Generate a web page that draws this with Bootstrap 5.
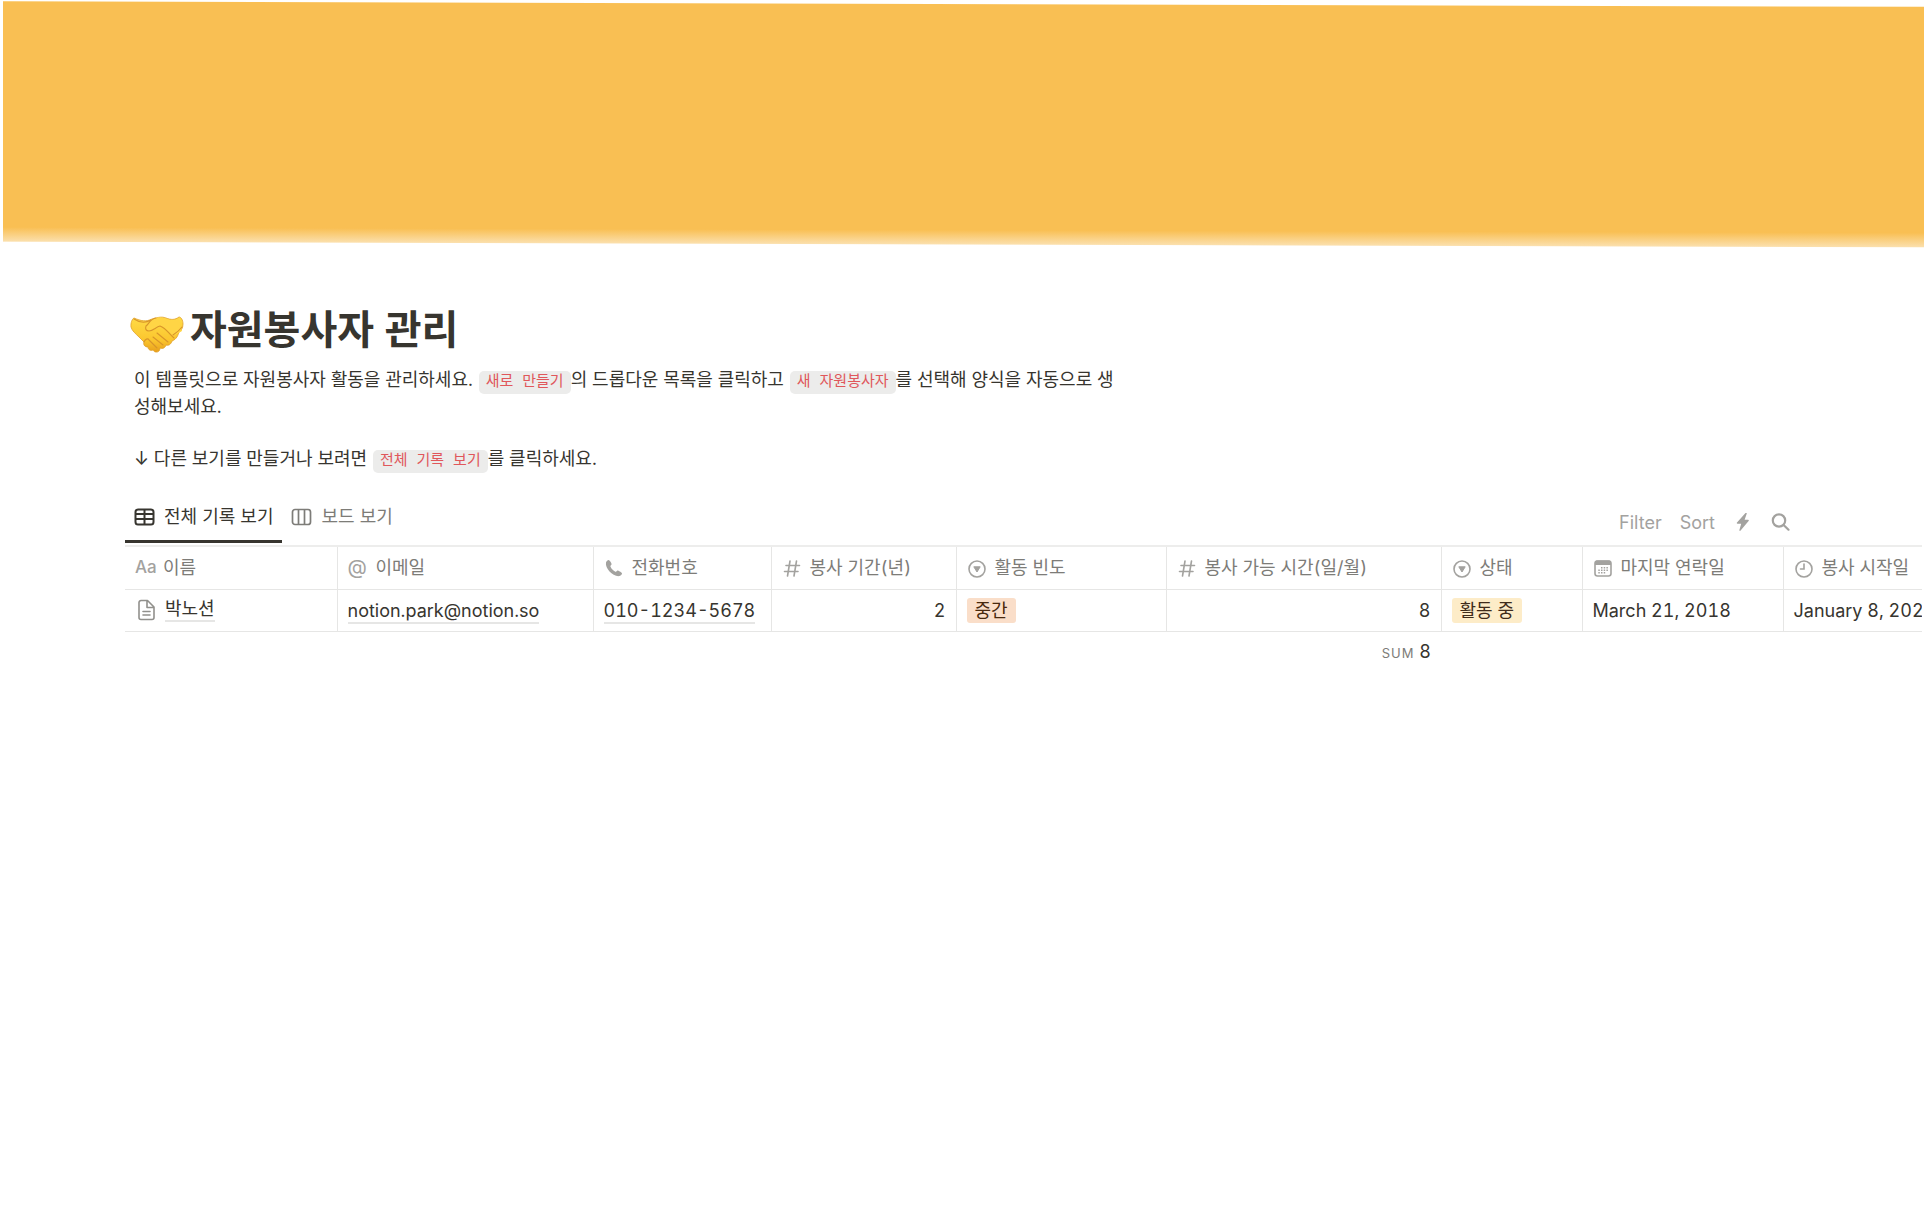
<!DOCTYPE html>
<html lang="ko">
<head>
<meta charset="utf-8">
<meta name="viewport" content="width=device-width, initial-scale=1">
<title>자원봉사자 관리</title>
<link href="https://cdn.jsdelivr.net/npm/bootstrap@5.3.0/dist/css/bootstrap.min.css" rel="stylesheet">
<style>
body{font-family:Inter,"Noto Sans CJK KR",sans-serif;font-size:18px;line-height:27px;color:#37352f;background:#fff;overflow-x:hidden;font-variant-numeric:tabular-nums}
.cover{height:241px;margin:4px 0 0 3px;background:linear-gradient(#f9bf53 0,#f9bf53 226px,#fbdfab 240px,#fff 241px);transform:skewY(.17deg)}
.page-body{padding:61px 2px 0 125px}
.page-title{font-size:40px;font-weight:700;line-height:48px;gap:6px;padding-left:5px}
.intro{max-width:1000px;padding:12px 0 0 9px}
.intro p + p{margin-top:25px}
.intro code{font-family:"Liberation Mono","Noto Sans CJK KR",monospace;font-size:15px;line-height:15px;color:#e0575b;background:#ececeb;border-radius:5px;padding:3px 7px;margin-left:1px}
.view-bar{margin-top:25px;height:48px;padding-right:123px}
.view-tab{height:46px;padding:0 9px 4px;gap:9px;color:#7d7c78;background:none;border:0;border-bottom:3px solid transparent}
.view-tab.active{color:#37352f;border-bottom-color:#37352f}
.tool{color:#a3a29f;background:none;border:0;padding:0 9px;height:50px}
.tool-bolt{padding:0 12px}
.records{border-top:2px solid #ededec;overflow:hidden}
.records table{table-layout:fixed;width:1858px;margin:0}
.records th,.records td{height:42px;padding:0 10px;font-weight:400;white-space:nowrap;vertical-align:middle;border-bottom:1px solid #e6e6e5;border-right:1px solid #e6e6e5}
.records th{color:#7d7c78}
.records tfoot td{border:0}
.head-cell{gap:8px}
.head-icon{width:20px;color:#a3a29f;flex:none}
.page-icon{width:22px;color:#91908c;flex:none}
.aa{font-weight:500;font-size:17px}
.at{font-size:20px}
.under{color:inherit;text-decoration:none;border-bottom:2px solid #e6e6e5;line-height:22px;display:inline-block}
.tag{display:inline-block;line-height:25px;border-radius:3px;padding:0 8px}
.tag-orange{background:#fadec9;color:#49290e}
.tag-yellow{background:#fdecc8;color:#402c1b}
.sum-label{font-size:13px;letter-spacing:1px;color:#7d7c78}
.w-name{width:212px}.w-mail{width:256px}.w-phone{width:178px}.w-years{width:185px}.w-freq{width:210px}.w-hours{width:275px}.w-status{width:141px}.w-last{width:201px}.w-start{width:200px}
</style>
<script src="https://cdn.jsdelivr.net/npm/bootstrap@5.3.0/dist/js/bootstrap.bundle.min.js"></script>
</head>
<body>
<header class="cover"></header>
<main class="page-body">
  <h1 class="page-title d-flex align-items-center mb-0">
    <svg width="54" height="48" viewBox="0 0 54 48" aria-hidden="true">
      <defs><linearGradient id="skin" x1="0" y1="0" x2="0" y2="1"><stop offset="0" stop-color="#ffdb47"/><stop offset=".65" stop-color="#fbc62e"/><stop offset="1" stop-color="#e8a01c"/></linearGradient></defs>
      <path d="M4 12C2 13 .6 17 1 21c1 4 5 7 8 10l5 5c-1 3 1 5 4 5 0 3 3 4 5 3 1 2 4 3 6 1 1-1 1-3 1-3 3 1 5 0 6-3 3 1 5-1 6-4 5-2 6-6 7-9 2-1 4-4 4-8s-2-7-4-7c-4 3-8 3-13 1-5-2-10 0-14 1-6 3-11 2-18-1z" fill="url(#skin)" stroke="#e0a02a" stroke-width=".8"/>
      <path d="M16 20c3-1 4-7 10-8 4-1 8 0 11 1 5 2 8 2 12 0l3 12-9 5c-4-4-8-9-13-10-4 3-9 6-12 5-2-1-3-3-2-5z" fill="#ffd545"/>
      <path d="M4 13c6 4 12 4 17 1M16 20c-1 3 0 5 3 5 4 0 7-4 11-5 6 2 10 9 14 12M16 20c3-2 4-7 10-8M27 27l11 9M23 31l10 8M19 34l8 8M14 36c1-3 4-4 5-2M52 21c-3 4-6 6-9 8" fill="none" stroke="#d8952a" stroke-width="1.100" stroke-linecap="round"/>
    </svg>
    <span>자원봉사자 관리</span>
  </h1>
  <div class="intro">
    <p class="mb-0">이 템플릿으로 자원봉사자 활동을 관리하세요. <code>새로 만들기</code>의 드롭다운 목록을 클릭하고 <code>새 자원봉사자</code>를 선택해 양식을 자동으로 생성해보세요.</p>
    <p class="mb-0">↓ 다른 보기를 만들거나 보려면 <code>전체 기록 보기</code>를 클릭하세요.</p>
  </div>

  <div class="view-bar d-flex justify-content-between align-items-start">
    <div class="d-flex" role="tablist">
      <button type="button" role="tab" aria-selected="true" class="view-tab active d-flex align-items-center">
        <svg width="21" height="18" viewBox="0 0 21 18" fill="none" stroke="currentColor" stroke-width="2" aria-hidden="true"><rect x="1.500" y="1.500" width="18" height="15" rx="2.500"/><path d="M2 6h17M2 11h17M10.500 2v14"/></svg>
        <span>전체 기록 보기</span>
      </button>
      <button type="button" role="tab" aria-selected="false" class="view-tab d-flex align-items-center">
        <svg width="21" height="18" viewBox="0 0 21 18" fill="none" stroke="currentColor" stroke-width="1.700" aria-hidden="true"><rect x="1.500" y="1.500" width="18" height="15" rx="2.500"/><path d="M7.500 2v14M13.500 2v14"/></svg>
        <span>보드 보기</span>
      </button>
    </div>
    <div class="d-flex">
      <button type="button" class="tool">Filter</button>
      <button type="button" class="tool">Sort</button>
      <button type="button" class="tool tool-bolt d-flex align-items-center" aria-label="자동화"><svg width="14" height="18" viewBox="0 0 14 18" fill="currentColor"><path d="M9.500 0 1 9.500c-.5.600-.2 1.300.5 1.300h3.700L3.400 17c-.2.800.7 1.200 1.200.600L12.600 8c.5-.6.2-1.200-.5-1.200H8.600L10.700.800c.3-.8-.6-1.400-1.200-.8z"/></svg></button>
      <button type="button" class="tool d-flex align-items-center" aria-label="검색"><svg width="19" height="18" viewBox="0 0 19 18" fill="none" stroke="currentColor" stroke-width="2.200" stroke-linecap="round"><circle cx="8" cy="7.500" r="6.200"/><path d="m12.600 12 4.900 4.700"/></svg></button>
    </div>
  </div>

  <div class="records">
    <table>
      <colgroup><col class="w-name"><col class="w-mail"><col class="w-phone"><col class="w-years"><col class="w-freq"><col class="w-hours"><col class="w-status"><col class="w-last"><col class="w-start"></colgroup>
      <thead>
        <tr>
          <th scope="col"><div class="head-cell d-flex align-items-center"><span class="head-icon aa" aria-hidden="true">Aa</span>이름</div></th>
          <th scope="col"><div class="head-cell d-flex align-items-center"><span class="head-icon at" aria-hidden="true">@</span>이메일</div></th>
          <th scope="col"><div class="head-cell d-flex align-items-center"><svg class="head-icon" height="20" viewBox="0 0 20 20" fill="currentColor" aria-hidden="true"><path d="M2 4.500C2.600 3 4 1.800 5 2.200c1 .5 2.200 2.400 2.500 3.500.3 1-.6 1.600-1.200 2.200.5 2.200 3.400 5.200 5.700 6 .7-.7 1.400-1.600 2.400-1.200 1.100.4 3 1.500 3.500 2.400.6 1-.9 2.700-2.400 3C9.500 19.300.8 10.400 2 4.500z"/></svg>전화번호</div></th>
          <th scope="col"><div class="head-cell d-flex align-items-center"><svg class="head-icon" height="20" viewBox="0 0 20 20" fill="none" stroke="currentColor" stroke-width="1.600" stroke-linecap="round" aria-hidden="true"><path d="M8 3 5.500 18M14.500 3 12 18M4 7.500h13.500M2.500 13.500H16"/></svg>봉사 기간(년)</div></th>
          <th scope="col"><div class="head-cell d-flex align-items-center"><svg class="head-icon" height="20" viewBox="0 0 20 20" aria-hidden="true"><circle cx="10" cy="11" r="8" fill="none" stroke="currentColor" stroke-width="1.600"/><path d="M6.800 8.800h6.400L10 14z" fill="currentColor" stroke="currentColor" stroke-linejoin="round"/></svg>활동 빈도</div></th>
          <th scope="col"><div class="head-cell d-flex align-items-center"><svg class="head-icon" height="20" viewBox="0 0 20 20" fill="none" stroke="currentColor" stroke-width="1.600" stroke-linecap="round" aria-hidden="true"><path d="M8 3 5.500 18M14.500 3 12 18M4 7.500h13.500M2.500 13.500H16"/></svg>봉사 가능 시간(일/월)</div></th>
          <th scope="col"><div class="head-cell d-flex align-items-center"><svg class="head-icon" height="20" viewBox="0 0 20 20" aria-hidden="true"><circle cx="10" cy="11" r="8" fill="none" stroke="currentColor" stroke-width="1.600"/><path d="M6.800 8.800h6.400L10 14z" fill="currentColor" stroke="currentColor" stroke-linejoin="round"/></svg>상태</div></th>
          <th scope="col"><div class="head-cell d-flex align-items-center"><svg class="head-icon" height="20" viewBox="0 0 20 20" aria-hidden="true"><rect x="2" y="3" width="16" height="15" rx="2.500" fill="none" stroke="currentColor" stroke-width="1.600"/><path d="M2 4.500C2 3 3 2.500 4 2.500h12c1 0 2 .500 2 2V7H2z" fill="currentColor"/><g fill="currentColor"><path d="M8 9h1.500v1.500H8zM10.700 9h1.500v1.500h-1.500zM13.400 9h1.500v1.500h-1.500zM5.300 11.500h1.500V13H5.300zM8 11.500h1.500V13H8zM10.700 11.500h1.500V13h-1.500zM13.400 11.500h1.500V13h-1.500zM5.300 14h1.500v1.500H5.300zM8 14h1.500v1.500H8zM10.700 14h1.500v1.500h-1.500z"/></g></svg>마지막 연락일</div></th>
          <th scope="col"><div class="head-cell d-flex align-items-center"><svg class="head-icon" height="20" viewBox="0 0 20 20" fill="none" stroke="currentColor" stroke-width="1.600" stroke-linecap="round" aria-hidden="true"><circle cx="10" cy="11" r="8"/><path d="M10 6v5H6.500"/></svg>봉사 시작일</div></th>
        </tr>
      </thead>
      <tbody>
        <tr>
          <td><div class="head-cell d-flex align-items-center"><svg class="page-icon" height="22" viewBox="0 0 20 22" fill="none" stroke="currentColor" stroke-width="1.600" stroke-linejoin="round" stroke-linecap="round" aria-hidden="true"><path d="M5 1.500h6.500L18 8v10.500a2 2 0 0 1-2 2H5a2 2 0 0 1-2-2v-15a2 2 0 0 1 2-2zM11 2v6.500h6.500M7 12.500h7M7 16h7"/></svg><a class="under" href="#">박노션</a></div></td>
          <td><a class="under" href="mailto:notion.park@notion.so">notion.park@notion.so</a></td>
          <td><a class="under" href="tel:010-1234-5678">010-1234-5678</a></td>
          <td class="text-end">2</td>
          <td><span class="tag tag-orange">중간</span></td>
          <td class="text-end">8</td>
          <td><span class="tag tag-yellow">활동 중</span></td>
          <td>March 21, 2018</td>
          <td>January 8, 2020</td>
        </tr>
      </tbody>
      <tfoot>
        <tr><td colspan="6" class="text-end"><span class="sum-label">SUM</span> 8</td><td colspan="3"></td></tr>
      </tfoot>
    </table>
  </div>
</main>
</body>
</html>
